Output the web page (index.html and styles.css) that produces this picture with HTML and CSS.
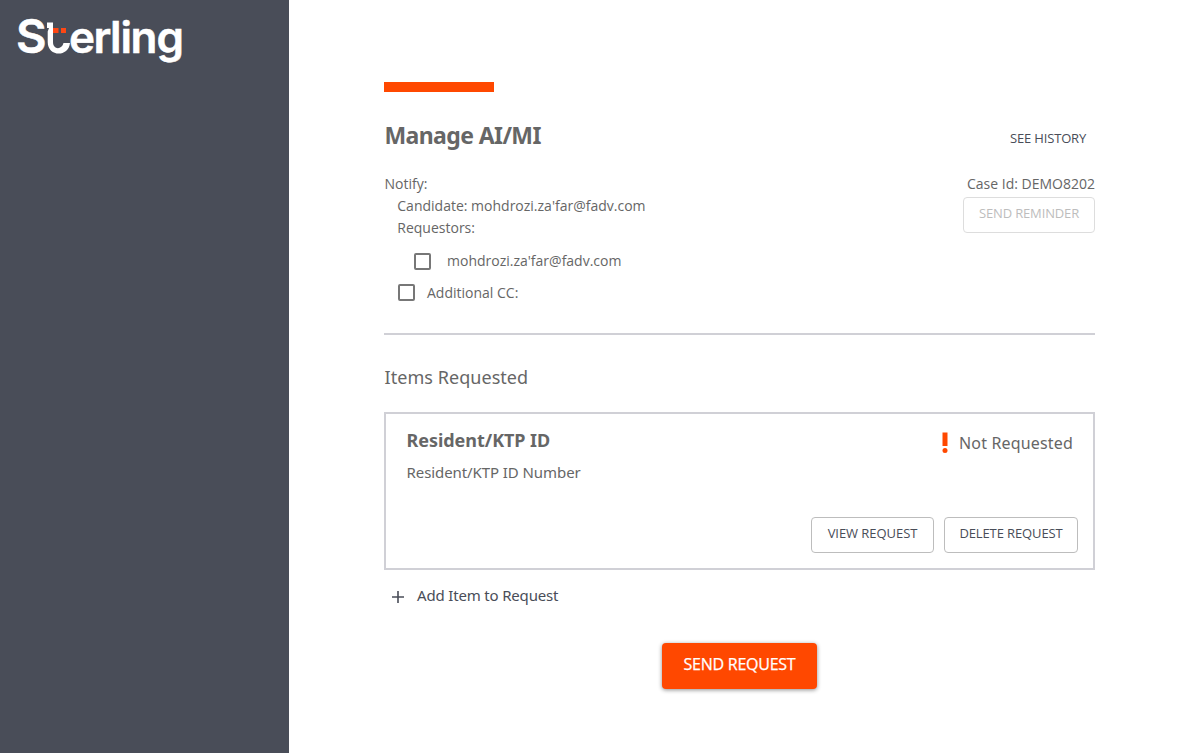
FILE: index.html
```html
<!DOCTYPE html>
<html lang="en">
<head>
<meta charset="utf-8">
<title>Manage AI/MI</title>
<link rel="stylesheet" href="styles.css">
</head>
<body>
<div class="app">
  <aside class="sidebar">
    <svg class="logo" width="190" height="72" viewBox="6 6 190 72" role="img" aria-label="Sterling">
      <text class="logo-text logo-s" x="16" y="53.200">S</text>
      <text class="logo-text" y="53" x="69 93.500 110 120.500 130.500 156.500">erling</text>
      <path class="logo-t" d="M47 22.500h6V42c0 8 9 8 10.500 1H70c-1.500 14.500-22.300 14-22.300-1V31.500l1.300-3.500h-2z"/>
      <path class="logo-dots" d="M53 28h5.500v5H53zM61 28h5v5h-5z"/>
    </svg>
  </aside>
  <main class="content">
    <div class="accent"></div>
    <header class="heading">
      <h1 class="title">Manage AI/MI</h1>
      <a class="history">SEE HISTORY</a>
    </header>
    <section class="notify">
      <div class="recipients">
        <div class="line">Notify:</div>
        <div class="line indent">Candidate: mohdrozi.za'far@fadv.com</div>
        <div class="line indent">Requestors:</div>
        <label class="check requestor"><span class="box"></span><span class="check-text">mohdrozi.za'far@fadv.com</span></label>
        <label class="check additional"><span class="box"></span><span class="check-text">Additional CC:</span></label>
      </div>
      <div class="case">
        <div class="line">Case Id: DEMO8202</div>
        <button class="btn reminder" disabled>SEND REMINDER</button>
      </div>
    </section>
    <h2 class="subtitle">Items Requested</h2>
    <article class="card">
      <div class="card-top">
        <div>
          <h3 class="item-title">Resident/KTP ID</h3>
          <p class="item-text">Resident/KTP ID Number</p>
        </div>
        <div class="status">
          <svg width="6" height="22" viewBox="0 0 6 22"><path d="M.5.500h5V14h-5z"/><circle cx="3" cy="18.500" r="2.500"/></svg>
          <span>Not Requested</span>
        </div>
      </div>
      <div class="actions">
        <button class="btn view">VIEW REQUEST</button>
        <button class="btn delete">DELETE REQUEST</button>
      </div>
    </article>
    <a class="add">
      <svg width="12" height="12" viewBox="0 0 12 12"><path d="M6 0v12M0 6h12"/></svg>
      <span class="add-text">Add Item to Request</span>
    </a>
    <button class="send">SEND REQUEST</button>
  </main>
</div>
</body>
</html>
```
FILE: styles.css
```css
* { box-sizing: border-box; }
body { margin: 0; background: #fff; color: #666; font-family: "Noto Sans", sans-serif; font-size: 14px; }
h1, h2, h3, p { margin: 0; }
button { font-family: inherit; margin: 0; }
.app { display: flex; height: 753px; overflow: hidden; }
.sidebar { width: 289px; flex: none; background: #494d58; padding: 6px; }
.logo { display: block; }
.logo-text { font-family: Inter, sans-serif; font-size: 44px; font-weight: 600; fill: #fff; stroke: #fff; stroke-width: .5; }
.logo-s { font-size: 47px; }
.logo-t { fill: #fff; }
.logo-dots { fill: #ff4713; }
.content { width: 806px; padding: 82px 0 0 95px; display: flex; flex-direction: column; }
.accent { width: 110px; height: 10px; background: #ff4800; }
.heading { display: flex; justify-content: space-between; height: 81px; padding: 27px 9px 0 .5px; }
.title { font-size: 23px; line-height: 32px; font-weight: 700; letter-spacing: -0.6px; }
.history { font-family: "Open Sans", sans-serif; font-size: 13px; letter-spacing: -0.18px; line-height: 20px; margin-top: 9px; color: #494d58; }
.notify { display: flex; justify-content: space-between; height: 162px; border-bottom: 2px solid #d0d0d6; font-family: "Open Sans", sans-serif; }
.recipients { padding-left: .5px; }
.line { line-height: 22px; }
.indent { padding-left: 12.800px; }
.check { display: flex; align-items: center; height: 32px; }
.check-text { padding-bottom: 2px; }
.box { width: 17px; height: 17px; border: 2px solid #777; border-radius: 2px; }
.requestor { margin: 6px 0 0 29.500px; gap: 16px; }
.additional { margin: -1px 0 0 13.500px; gap: 12px; }
.additional .check-text { padding-bottom: 0; }
.case { text-align: right; }
.btn { height: 36px; border: 1px solid #bdbdbd; border-radius: 4px; background: #fff; color: #494d58; font-family: "Open Sans", sans-serif; font-size: 13px; letter-spacing: -0.05px; padding: 0 0 5px; }
.reminder { display: block; width: 132px; margin-top: 2px; border-color: #ddd; color: #bdbdbd; letter-spacing: -0.15px; }
.subtitle { font-size: 18px; font-weight: 400; line-height: 28px; margin: 28px 0 21px .5px; letter-spacing: .05px; }
.card { height: 158px; border: 2px solid #d0d0d6; padding: 13px 15px 15px 20.500px; display: flex; flex-direction: column; justify-content: space-between; }
.card-top { display: flex; justify-content: space-between; }
.item-title { font-size: 18px; line-height: 26px; letter-spacing: -0.05px; }
.item-text { font-size: 15px; line-height: 22px; margin-top: 8px; letter-spacing: -0.08px; }
.status { display: flex; gap: 11px; height: 22px; margin: 4px 5px 0 0; font-size: 16px; line-height: 24px; letter-spacing: .17px; }
.status svg { fill: #ff4800; margin-top: 1px; }
.actions { display: flex; justify-content: flex-end; gap: 10px; }
.view { width: 123px; }
.delete { width: 134px; letter-spacing: -0.12px; }
.add { display: flex; align-items: center; gap: 13px; margin: 15px 0 0 8px; height: 24px; font-size: 15px; letter-spacing: -0.17px; color: #494d58; }
.add svg { fill: none; stroke: #494d58; stroke-width: 1.6; }
.add-text { padding-bottom: 4px; }
.send { align-self: center; width: 155px; height: 46px; margin-top: 34px; border: 0; border-radius: 4px; background: #ff4800; color: #fff; font-family: "Open Sans", sans-serif; font-size: 16px; font-weight: 500; letter-spacing: -0.25px; -webkit-text-stroke: .25px #fff; padding: 0 0 5px; box-shadow: 0 1px 4px rgba(0,0,0,.45); }
```
